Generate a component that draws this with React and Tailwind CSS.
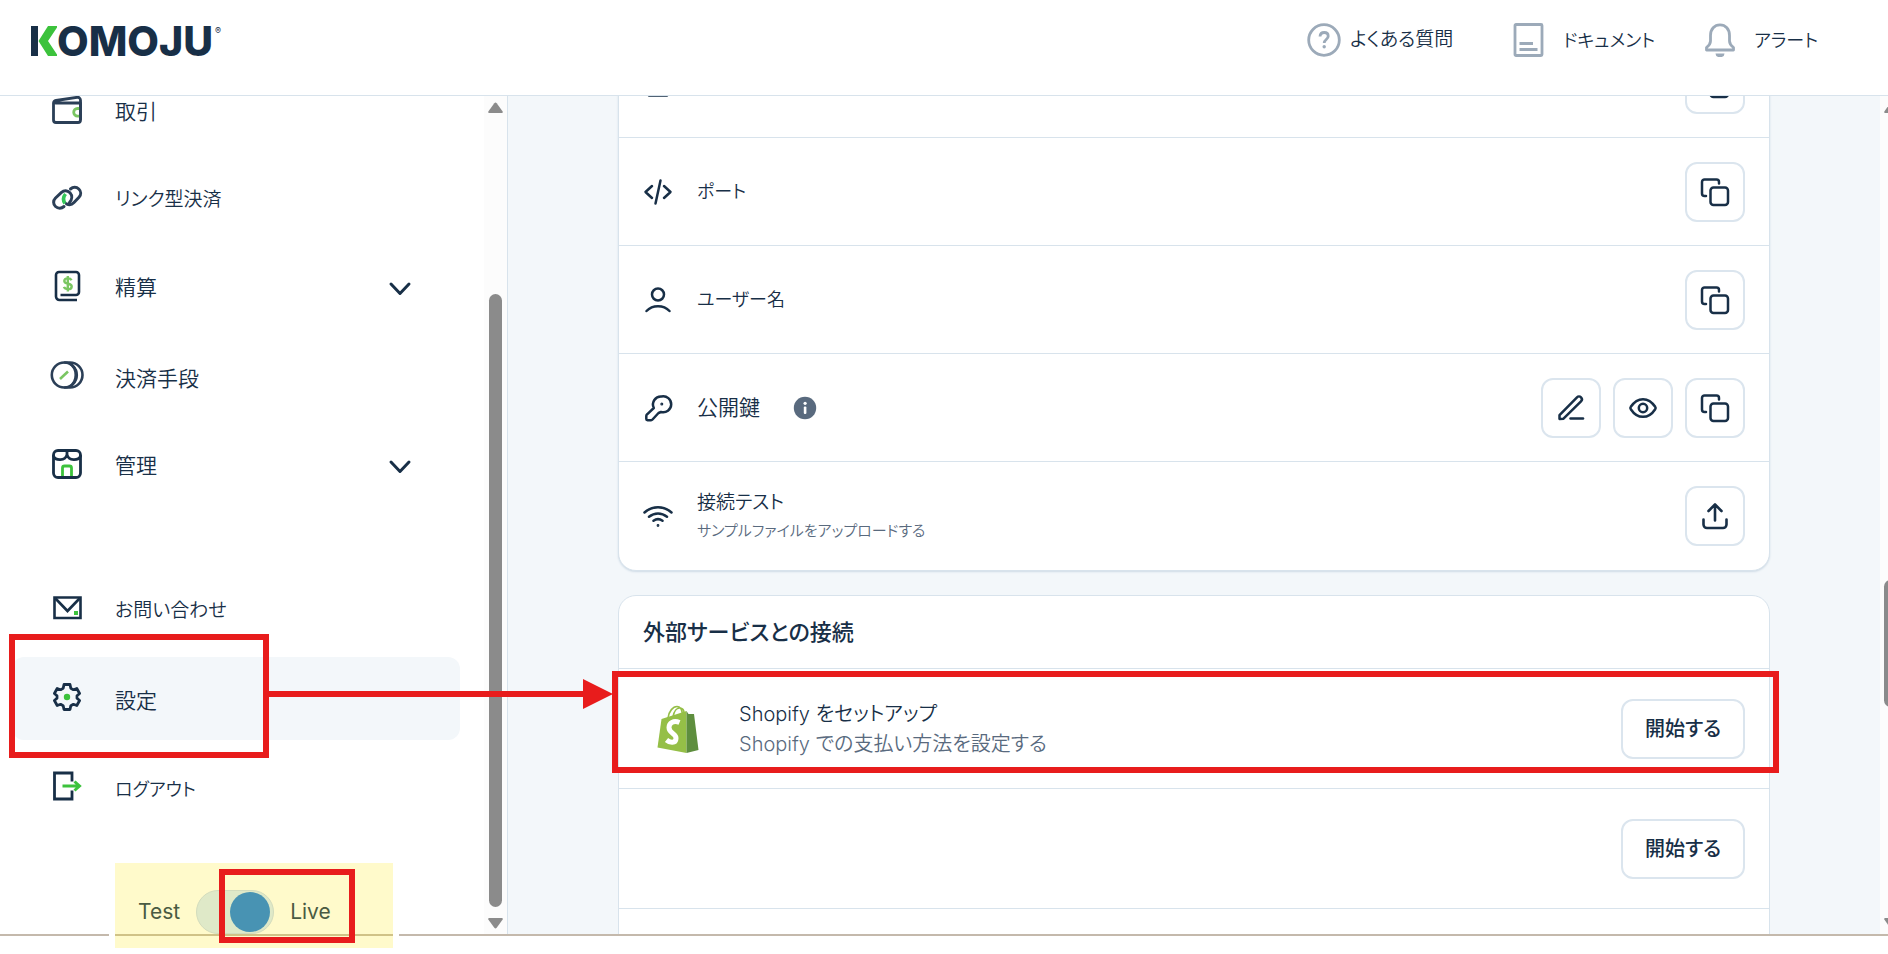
const Svg = ({ size = 30, children, ...rest }) => (
  <svg
    width={size}
    height={size}
    viewBox={`0 0 ${size} ${size}`}
    fill="none"
    stroke="#182f47"
    strokeWidth="2.5"
    strokeLinecap="round"
    strokeLinejoin="round"
    className="shrink-0"
    aria-hidden="true"
    {...rest}
  >
    {children}
  </svg>
);

/* Sidebar icons, 32px grid */
const WalletIcon = () => (
  <Svg size={32} stroke="#2b3f57" strokeWidth="2.8">
    <path d="M2.5 11v17a2.500 2.500 0 0 0 2.500 2.500h22a2.500 2.500 0 0 0 2.500-2.500V11H4.500M2.500 11.500a3 3 0 0 1 2.500-3L26 5.300a3 3 0 0 1 3.500 3V12" />
    <path d="M29.500 16.500h-3a3.800 3.800 0 0 0 0 7.600h3" stroke="#7ac662" strokeLinecap="butt" />
    <path d="M29.500 11v16" />
  </Svg>
);

const LinkIcon = () => (
  <Svg size={32} stroke="#2b3f57" strokeWidth="3">
    <path d="M18.500 21.500c2.700-3 3-7 .5-9.800-2.500-2.500-6-2.500-8.500-.3L4.500 17c-2.500 2.500-2.500 6.200 0 8.500 2.600 2.300 6 2.200 8.500 0" />
    <path d="M14.500 13c-2.400 3-2.500 6.500-.5 9.500" stroke="#34c759" strokeLinecap="butt" strokeWidth="3.600" />
    <path d="M15.500 22.800c2.500 1.300 5.500.8 7.500-1.300l5-5.200c2.300-2.500 2.200-6-.2-8.300s-5.800-2.200-8.300 0" />
  </Svg>
);

const BillIcon = () => (
  <Svg size={32} strokeWidth="2.600" strokeLinecap="butt">
    <path d="M26 30H8.500A3.500 3.500 0 0 1 5 26.500V5a3 3 0 0 1 3-3h17a3 3 0 0 1 3 3v17a3 3 0 0 1-3 3H9.500" />
    <path d="M20.500 10.200c-.6-1.300-2-1.800-3.700-1.800-2 0-3.500.9-3.500 2.600 0 3.900 7.400 1.600 7.400 5.400 0 1.700-1.700 2.700-3.700 2.700-1.900 0-3.500-.7-4.100-2.200M16.800 6v15.500" stroke="#7ac662" strokeWidth="2.400" />
  </Svg>
);

const CoinsIcon = () => (
  <Svg size={34} stroke="#2b3f57" strokeWidth="2.600">
    <circle cx="14.300" cy="17" r="12.500" />
    <path d="M15 4.500h5a12.500 12.500 0 0 1 0 25h-5M19 5c9 5 9 19 0 24" />
    <path d="m10 21 8-7.500" stroke="#7ac662" strokeLinecap="butt" />
  </Svg>
);

const ShopIcon = () => (
  <Svg size={32} strokeWidth="2.800">
    <rect x="2.500" y="2.500" width="27" height="27" rx="4.500" />
    <path d="M2.500 8c1.500 4.500 12 5.500 13.500-1.500C17.500 13.500 28 12.500 29.500 8M16 3v4" />
    <path d="M11.500 28V20a2 2 0 0 1 2-2h5a2 2 0 0 1 2 2v8" stroke="#3cc23c" strokeLinecap="butt" />
  </Svg>
);

const MailIcon = () => (
  <Svg size={32} strokeWidth="2.600" strokeLinecap="butt" strokeLinejoin="miter">
    <path d="M3.500 5.500h26v20.500h-26z" />
    <path d="m4.500 6.500 12 12.500 12-12.500" />
    <rect x="23" y="19" width="4" height="4" fill="#3cc23c" stroke="none" />
  </Svg>
);

const GearIcon = () => (
  <Svg size={32} strokeWidth="2.800">
    <path d="M13 3.500h6l.8 3.800 2.600 1.400 3.400-1.200 2.800 5-2.600 2.300v2.400l2.600 2.300-2.800 5-3.400-1.200-2.600 1.400-.8 3.800h-6l-.8-3.800-2.600-1.400-3.400 1.200-2.800-5L6 17.200v-2.400l-2.600-2.300 2.800-5 3.400 1.200 2.600-1.400z" />
    <circle cx="16" cy="16" r="3.200" fill="#3cc23c" stroke="none" />
  </Svg>
);

const LogoutIcon = () => (
  <Svg size={32} strokeWidth="2.800" strokeLinecap="butt" strokeLinejoin="miter">
    <path d="M21 11.500V3H3.500v26H21v-8.500" />
    <path d="M11.500 16h17M23.500 11.500l5 4.500-5 4.500" stroke="#3cc23c" strokeWidth="3" />
  </Svg>
);

/* Row and button icons, 30px grid */
const CodeIcon = () => (
  <Svg>
    <path d="M9 9 2.500 15 9 21M21 9l6.500 6-6.500 6M17.500 3.500l-5 23" />
  </Svg>
);

const UserIcon = () => (
  <Svg>
    <circle cx="15" cy="9.500" r="6" />
    <path d="M3.500 26c6-6.500 17-6.500 23 0" />
  </Svg>
);

const KeyIcon = () => (
  <Svg>
    <path d="M18.500 3.500a8 8 0 1 1-.5 15.500L15.500 20l-6 6.500a2 2 0 0 1-1.500.7H4.500a1.200 1.200 0 0 1-1.200-1.200v-3c0-.7.3-1.300.8-1.700l6.700-6.300a8 8 0 0 1 7.700-11.500z" />
    <circle cx="18.800" cy="11" r="0.600" strokeWidth="1.800" />
  </Svg>
);

const WifiIcon = () => (
  <Svg>
    <path d="M1.500 11.500c8-7 19-7 27 0M6 15.800c5.500-4.500 12.500-4.500 18 0M10.500 19.800c3-2.200 6-2.200 9 0" />
    <circle cx="15" cy="24.500" r="0.600" strokeWidth="1.600" />
  </Svg>
);

const ServerIcon = () => (
  <Svg>
    <rect x="5" y="2" width="20" height="18" rx="2" />
    <path d="M6 26.500h18" />
  </Svg>
);

const CopyIcon = () => (
  <Svg>
    <rect x="10.500" y="10.500" width="17.500" height="17.500" rx="3" />
    <path d="M6 19H4.500A2.500 2.500 0 0 1 2 16.500V5a2.500 2.500 0 0 1 2.500-2.500h12A2.500 2.500 0 0 1 19 5v1.500" />
  </Svg>
);

const PenIcon = () => (
  <Svg>
    <path d="M3.500 26v-3.800L21 4.300a2.700 2.700 0 0 1 4 4L7.500 25.700z" />
    <path d="M14.500 25.500h12.500" />
  </Svg>
);

const EyeIcon = () => (
  <Svg>
    <path d="M2.800 16.200a2 2 0 0 1 0-2.400C9.500 3.600 20.500 3.600 27.200 13.800a2 2 0 0 1 0 2.400c-6.700 10.200-17.700 10.200-24.400 0z" />
    <circle cx="15" cy="15" r="4.200" />
  </Svg>
);

const UploadIcon = () => (
  <Svg strokeWidth="2.600">
    <path d="M15 19.500V4M8.500 10 15 3.500l6.500 6.500M3.500 18.500v5a3.500 3.500 0 0 0 3.500 3.500h16a3.500 3.500 0 0 0 3.500-3.500v-5" />
  </Svg>
);

const InfoIcon = () => (
  <Svg size={24} stroke="none">
    <circle cx="12" cy="12" r="11.200" fill="#596a7e" />
    <rect x="10.800" y="10.500" width="2.600" height="7.500" rx="1" fill="#fff" />
    <circle cx="12.100" cy="7.300" r="1.600" fill="#fff" />
  </Svg>
);

/* Header icons, 34px grid */
const HelpIcon = () => (
  <Svg size={34} stroke="#9caab9" strokeWidth="2.800">
    <circle cx="17" cy="17" r="15.300" />
    <path d="M13 13.500c.2-2.600 1.800-4 4.200-4s4 1.500 4 3.700c0 3.300-4 3.300-4 6.800" strokeLinecap="butt" />
    <circle cx="17.200" cy="23.800" r="1.700" fill="#9caab9" stroke="none" />
  </Svg>
);

const DocIcon = () => (
  <Svg size={34} stroke="#9caab9" strokeWidth="2.800" strokeLinecap="butt">
    <rect x="2" y="1.500" width="27" height="31" rx="1" />
    <path d="M6.500 20.500h13.500M6.500 26.500h18" />
  </Svg>
);

const BellIcon = () => (
  <Svg size={34} stroke="#9caab9" strokeWidth="2.800" strokeLinecap="butt">
    <path d="M2.500 27v-2.500c2.500-2 4-3.500 4-6.500v-5.500C6.500 6 10.500 1.800 16 1.800S25.500 6 25.500 12.500V18c0 3 1.500 4.500 4 6.500V27z" />
    <path d="M11.500 30.500h9a4.500 3.700 0 0 1-9 0z" fill="#9caab9" stroke="none" />
  </Svg>
);

const ShopifyLogo = () => (
  <svg width="42" height="48" viewBox="0 0 42 48" className="shrink-0" role="img" aria-label="Shopify">
    <path d="M11 13C12 6 16 1.500 20 1.500c3 0 5 3 5.500 8M16 12C17 6 20 2.500 23.500 3c2.500.5 3.500 3 3.500 5" fill="none" stroke="#95bf47" strokeWidth="1.600" />
    <path d="M4.500 14 29.500 6v42L.5 42.500z" fill="#95bf47" />
    <path d="m29.500 6 2 3h5.500l4.500 36-12 3z" fill="#5e8e3e" />
    <path d="M22.500 17.500c-6-2.500-10.500.5-10.500 5 0 6 7.500 6 7 11-.3 5-6 4.500-9.500 1.500" fill="none" stroke="#fff" strokeWidth="5" />
  </svg>
);

const Arrow = ({ down }) => (
  <svg width="15" height="12" viewBox="0 0 15 12" className={down ? 'shrink-0 rotate-180' : 'shrink-0'} fill="#8b8b8b" aria-hidden="true">
    <path d="M6.300 1.200a1.500 1.500 0 0 1 2.400 0l5.800 8c.7 1 .1 1.800-.9 1.800H1.400C.4 11-.2 10.200.5 9.200z" />
  </svg>
);

const topNav = [
  { label: 'よくある質問', icon: HelpIcon, className: 'gap-[9px] text-[19px]' },
  { label: 'ドキュメント', icon: DocIcon, className: 'gap-4 text-[18px]' },
  { label: 'アラート', icon: BellIcon, className: 'gap-4 text-[18px]' },
];

const mainMenu = [
  { label: '取引', icon: WalletIcon, size: 'text-[21px]' },
  { label: 'リンク型決済', icon: LinkIcon, size: 'text-[19px]' },
  { label: '精算', icon: BillIcon, size: 'text-[21px]', expandable: true },
  { label: '決済手段', icon: CoinsIcon, size: 'text-[21px]' },
  { label: '管理', icon: ShopIcon, size: 'text-[21px]', expandable: true },
];

const subMenu = [
  { label: 'お問い合わせ', icon: MailIcon, size: 'text-[19px]' },
  { label: '設定', icon: GearIcon, size: 'text-[21px]', active: true },
  { label: 'ログアウト', icon: LogoutIcon, size: 'text-[18px]' },
];

const copyAction = { name: 'コピー', icon: CopyIcon };

const rows = [
  { icon: ServerIcon, actions: [copyAction] },
  { icon: CodeIcon, label: 'ポート', size: 'text-[18px]', actions: [copyAction] },
  { icon: UserIcon, label: 'ユーザー名', size: 'text-[18px]', actions: [copyAction] },
  {
    icon: KeyIcon,
    label: '公開鍵',
    size: 'text-[21px]',
    info: true,
    actions: [{ name: '編集', icon: PenIcon }, { name: '表示', icon: EyeIcon }, copyAction],
  },
  {
    icon: WifiIcon,
    label: '接続テスト',
    size: 'text-[19px]',
    note: 'サンプルファイルをアップロードする',
    actions: [{ name: 'アップロード', icon: UploadIcon }],
  },
];

const Menu = ({ items }) => (
  <ul className="flex flex-col gap-[6px]">
    {items.map(({ label, icon: Icon, size, expandable, active }) => (
      <li key={label}>
        <a
          href="#"
          className={`flex h-[83px] items-center rounded-xl pr-12 pl-[39px] ${active ? 'bg-[#f3f7fa]' : ''}`}
        >
          <span className="flex w-8 justify-center pb-1">
            <Icon />
          </span>
          <span className={`ml-8 flex-1 ${size} ${expandable ? '' : 'pt-1'}`}>{label}</span>
          {expandable && (
            <Svg size={24} strokeWidth="3">
              <path d="m3 8 9 9.500L21 8" />
            </Svg>
          )}
        </a>
      </li>
    ))}
  </ul>
);

const StartButton = () => (
  <button type="button" className="h-[60px] w-[124px] rounded-xl border-2 border-[#dbe5ee] text-[20px] font-medium">
    開始する
  </button>
);

const App = () => {
  return (
    <div className="relative flex h-screen flex-col overflow-hidden bg-white font-[Inter,'Noto_Sans_CJK_JP',sans-serif] font-[350] text-[#182f47] [font-feature-settings:'palt']">
      <header className="flex h-24 shrink-0 items-start justify-between border-b border-[#d8e3ec] pr-[70px] pl-[31px]">
        <a href="#" className="mt-[26px] flex h-[30px] items-center" aria-label="KOMOJU">
          <svg width="26" height="30" viewBox="0 0 26 30" aria-hidden="true">
            <path d="M0 0h7v30H0z" fill="#182f47" />
            <path d="M17 0h10L17 15l10 15H17L7.500 15z" fill="#3cc23c" />
          </svg>
          <span className="text-[41px] leading-none font-extrabold">OMOJU</span>
          <span className="ml-[2px] self-start text-[9px] leading-none font-normal">®</span>
        </a>
        <nav className="mt-[23px] grid grid-cols-[206px_191px_auto]">
          {topNav.map(({ label, icon: Icon, className }) => (
            <a key={label} href="#" className={`flex h-[34px] items-center ${className}`}>
              <Icon />
              {label}
            </a>
          ))}
        </nav>
      </header>

      <div className="flex min-h-0 flex-1">
        <aside className="flex w-[508px] shrink-0 border-r border-[#d8e3ec]">
          <div className="flex min-w-0 flex-1 flex-col">
            <nav className="min-h-0 flex-1 overflow-hidden pr-6 pl-3">
              <div className="-mt-7 flex flex-col gap-[61px]">
                <Menu items={mainMenu} />
                <Menu items={subMenu} />
              </div>
            </nav>

            {/* Mode switch, hangs over the bottom rule */}
            <div className="relative z-10 -mb-[14px] ml-[109px] w-[290px] bg-white px-[6px]">
              <div className="relative flex h-[85px] items-center bg-[#fffacb] pt-3 pl-[23px] text-[21px] font-normal text-[#4a5a42]">
                <div className="absolute inset-x-0 top-[71px] h-[2px] bg-[#d0c287]" />
                <label htmlFor="mode">Test</label>
                <input
                  id="mode"
                  type="checkbox"
                  role="switch"
                  defaultChecked
                  className="relative mx-4 h-[44px] w-[78px] appearance-none rounded-full border border-[#d3dcbd] bg-[#dfe9c8] before:absolute before:top-px before:left-0 before:size-10 before:rounded-full before:bg-[#4893b3] before:content-[''] checked:before:left-[33px]"
                />
                <label htmlFor="mode">Live</label>
              </div>
            </div>
          </div>
          <div className="flex w-[23px] flex-col items-center bg-[#fcfcfc] pt-[6px] pb-[5px]">
            <Arrow />
            <div className="mt-[180px] mb-[10px] w-[13px] flex-1 rounded-full bg-[#8b8b8b]" />
            <Arrow down />
          </div>
        </aside>

        <main className="min-w-0 flex-1 overflow-hidden bg-[#f3f7fa] px-8">
          <div className="mx-auto -mt-[67px] flex max-w-6xl flex-col gap-6">
            <section className="rounded-[18px] border border-[#d8e3ec] bg-white shadow-[0_1px_2px_#cfdbe6]">
              {rows.map(({ icon: Icon, label, size, note, info, actions }, index) => (
                <div key={index} className="flex h-[108px] items-center border-b border-[#d8e3ec] px-6 last:border-b-0">
                  <Icon />
                  <div className="ml-6">
                    {label && <p className={`leading-[30px] ${size}`}>{label}</p>}
                    {note && <p className="text-[15px] leading-[26px] text-[#596a7e]">{note}</p>}
                  </div>
                  {info && (
                    <button type="button" className="ml-[33px]" aria-label="公開鍵について">
                      <InfoIcon />
                    </button>
                  )}
                  <div className="ml-auto flex gap-3">
                    {actions.map(({ name, icon: ActionIcon }) => (
                      <button
                        key={name}
                        type="button"
                        aria-label={name}
                        className="flex size-[60px] items-center justify-center rounded-xl border-2 border-[#dbe5ee]"
                      >
                        <ActionIcon />
                      </button>
                    ))}
                  </div>
                </div>
              ))}
            </section>

            <section className="rounded-[18px] border border-[#d8e3ec] bg-white">
              <h2 className="flex h-[73px] items-center border-b border-[#d8e3ec] px-6 text-[22px] font-medium">
                外部サービスとの接続
              </h2>
              <div className="flex h-[120px] items-center border-b border-[#d8e3ec] px-6">
                <span className="ml-[14px] flex w-[82px]">
                  <ShopifyLogo />
                </span>
                <div className="flex-1 text-[20px] leading-[30px]">
                  <p>Shopify をセットアップ</p>
                  <p className="text-[#596a7e]">Shopify での支払い方法を設定する</p>
                </div>
                <StartButton />
              </div>
              <div className="flex h-[120px] items-center justify-end border-b border-[#d8e3ec] px-6">
                <StartButton />
              </div>
              <div className="h-[120px]" />
            </section>
          </div>
        </main>

        <div className="flex w-2 shrink-0 flex-col overflow-hidden bg-[#fcfcfc] pt-[6px] pb-[5px] pl-1">
          <Arrow />
          <div className="mt-[466px] h-[127px] w-[13px] rounded-full bg-[#8b8b8b]" />
          <div className="mt-auto">
            <Arrow down />
          </div>
        </div>
      </div>

      <footer className="h-5 shrink-0 border-t-2 border-[#c4b9ac] bg-white" />

      {/* Step markers */}
      <div className="pointer-events-none absolute top-[634px] left-[9px] z-20 h-[124px] w-[260px] border-[6px] border-[#e81c1c]" />
      <svg className="pointer-events-none absolute top-[679px] left-[269px] z-20" width="344" height="30" viewBox="0 0 344 30" fill="#e81c1c" aria-hidden="true">
        <path d="M0 12h314V0l30 15-30 15V18H0z" />
      </svg>
      <div className="pointer-events-none absolute top-[671px] right-[109px] left-[612px] z-20 h-[102px] border-[6px] border-[#e81c1c]" />
      <div className="pointer-events-none absolute top-[869px] left-[219px] z-20 h-[74px] w-[136px] border-[6px] border-[#e81c1c]" />
    </div>
  );
};

export default App;
